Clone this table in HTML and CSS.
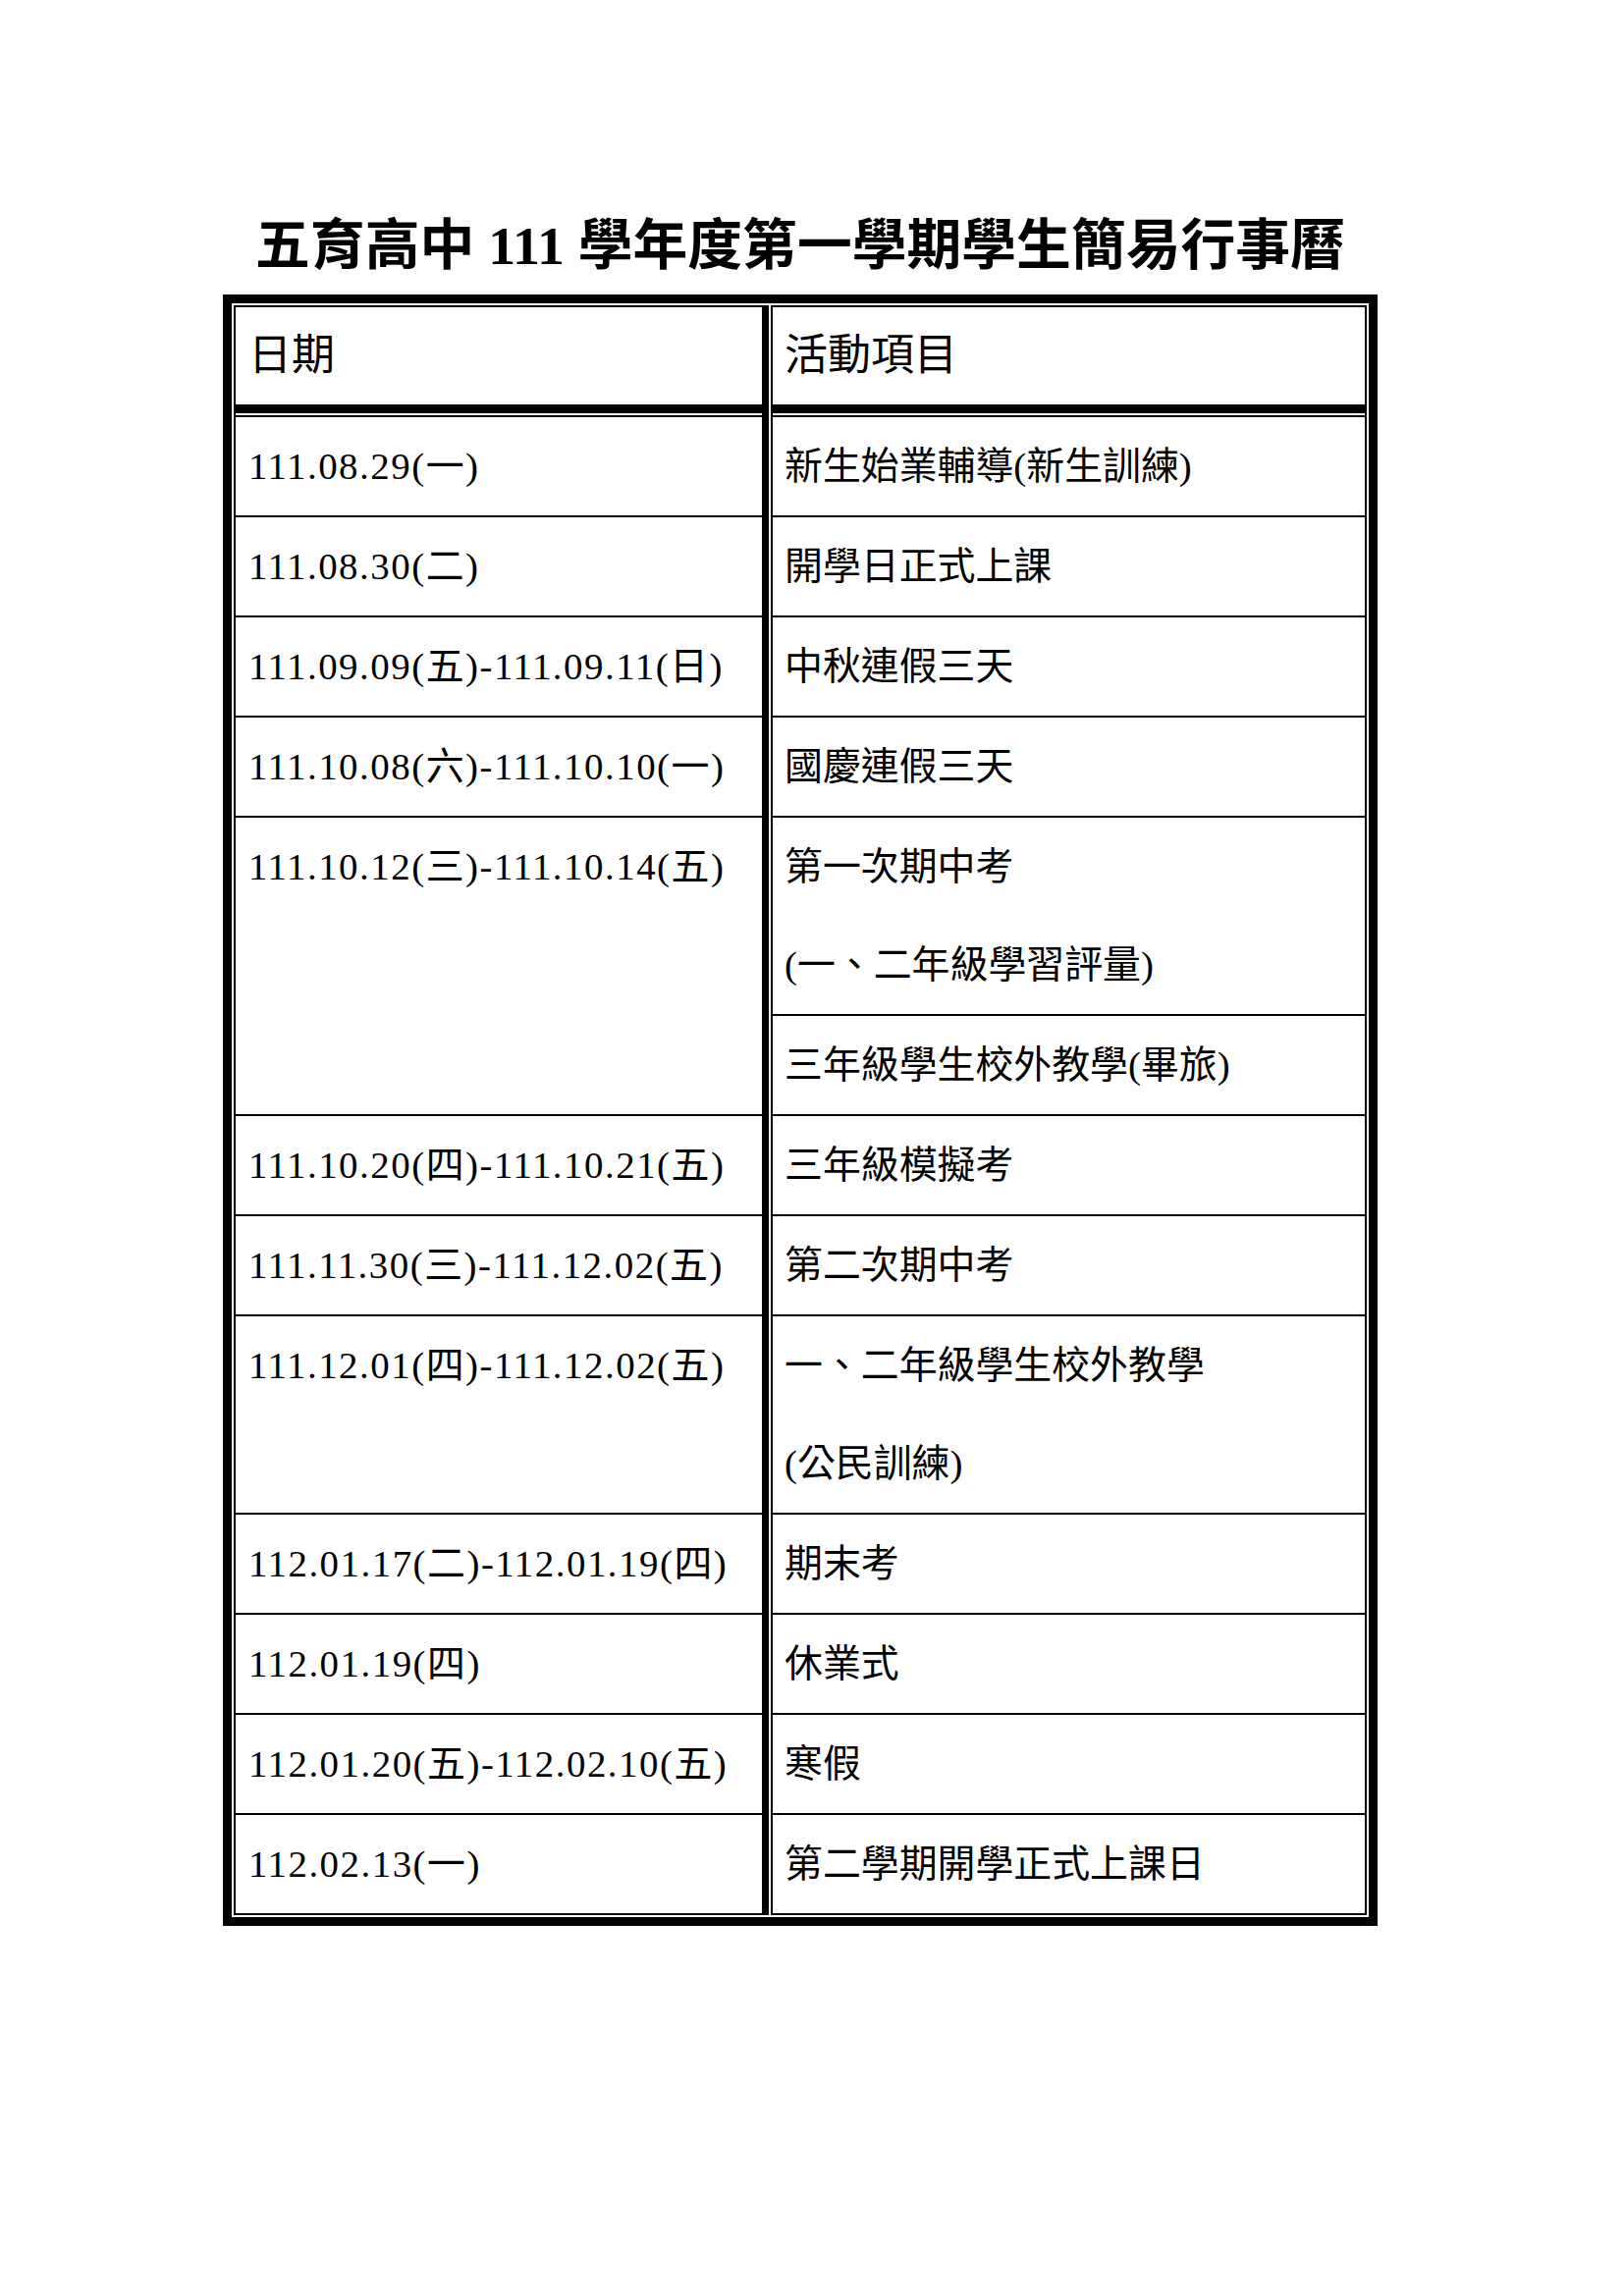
FILE: index.html
```html
<!DOCTYPE html>
<html lang="zh-Hant">
<head>
<meta charset="utf-8">
<title>五育高中 111 學年度第一學期學生簡易行事曆</title>
<link rel="stylesheet" href="styles.css">
</head>
<body>
<main class="page">
  <h1 class="title">五育高中 111 學年度第一學期學生簡易行事曆</h1>
  <table class="calendar">
    <colgroup>
      <col class="col-date">
      <col class="col-item">
    </colgroup>
    <thead>
      <tr>
        <th class="date">日期</th>
        <th class="item">活動項目</th>
      </tr>
    </thead>
    <tbody>
      <tr><td class="date">111.08.29(一)</td><td class="item">新生始業輔導(新生訓練)</td></tr>
      <tr><td class="date">111.08.30(二)</td><td class="item">開學日正式上課</td></tr>
      <tr><td class="date">111.09.09(五)-111.09.11(日)</td><td class="item">中秋連假三天</td></tr>
      <tr><td class="date">111.10.08(六)-111.10.10(一)</td><td class="item">國慶連假三天</td></tr>
      <tr><td class="date" rowspan="2">111.10.12(三)-111.10.14(五)</td><td class="item">第一次期中考<br>(一、二年級學習評量)</td></tr>
      <tr><td class="item">三年級學生校外教學(畢旅)</td></tr>
      <tr><td class="date">111.10.20(四)-111.10.21(五)</td><td class="item">三年級模擬考</td></tr>
      <tr><td class="date">111.11.30(三)-111.12.02(五)</td><td class="item">第二次期中考</td></tr>
      <tr><td class="date">111.12.01(四)-111.12.02(五)</td><td class="item">一、二年級學生校外教學<br>(公民訓練)</td></tr>
      <tr><td class="date">112.01.17(二)-112.01.19(四)</td><td class="item">期末考</td></tr>
      <tr><td class="date">112.01.19(四)</td><td class="item">休業式</td></tr>
      <tr><td class="date">112.01.20(五)-112.02.10(五)</td><td class="item">寒假</td></tr>
      <tr class="last"><td class="date">112.02.13(一)</td><td class="item">第二學期開學正式上課日</td></tr>
    </tbody>
  </table>
</main>
</body>
</html>
```

FILE: styles.css
```css
html, body {
  margin: 0;
  padding: 0;
  background: #fff;
}

body {
  color: #000;
  font-family: "Liberation Serif", "Noto Sans CJK TC", serif;
}

.page {
  width: 1176px;
  margin-left: 227px;
  padding-top: 210px;
}

.title {
  margin: 0 0 10px 0;
  font-size: 55.8px;
  line-height: 80px;
  font-weight: 700;
  text-align: center;
  white-space: nowrap;
}

.calendar {
  width: 1176px;
  table-layout: fixed;
  border-collapse: separate;
  border-spacing: 2px 0;
  border: 9px solid #000;
  padding: 2px 0;
  box-sizing: border-box;
}

.col-date { width: 545px; }
.col-item { width: 607px; }

.calendar th,
.calendar td {
  box-sizing: border-box;
  padding: 0;
  text-align: left;
  vertical-align: top;
  white-space: nowrap;
  border-top: 2px solid #000;
  border-left: 2px solid #000;
  border-right: 2px solid #000;
}

.calendar th {
  font-size: 44px;
  line-height: 99px;
  font-weight: 400;
  padding-bottom: 11px;
  background-image: linear-gradient(#000, #000);
  background-repeat: no-repeat;
  background-origin: border-box;
  background-size: 100% 9px;
  background-position: left 0 bottom 2px;
}

.calendar td {
  font-size: 38.9px;
  line-height: 100px;
}

.calendar .date {
  border-right-width: 7px;
  padding-left: 13px;
  letter-spacing: 1.5px;
}

.calendar .item {
  padding-left: 12px;
}

.calendar th.date {
  letter-spacing: 0;
}

.calendar tr.last td {
  border-bottom: 2px solid #000;
}
```
